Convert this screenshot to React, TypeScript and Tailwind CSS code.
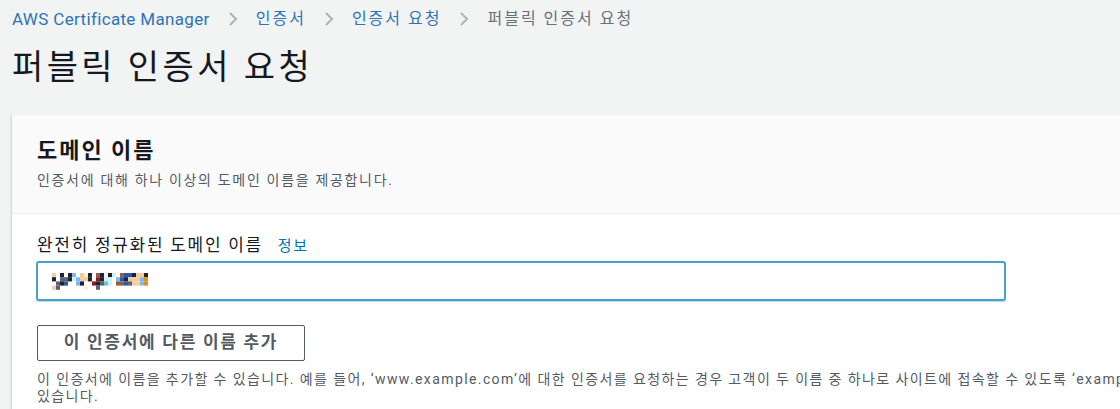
import React from 'react';

const font = "font-['Roboto','Noto_Sans_CJK_KR',sans-serif]";

const mosaicRows = [
  'a.n.kb.apk.mnpkc.mBBnaak.',
  'n.ggkcbaak.rkcc.bBnaaabo.',
  '.skB..bn..rkgbc.mmBgaabo.',
  'as......p..s.............',
];

const mosaicColors: Record<string, string> = {
  a: '#f3cda2',
  n: '#1d1d4d',
  k: '#222228',
  b: '#80b7e6',
  g: '#5b6372',
  c: '#c9f4fa',
  r: '#8d1c25',
  m: '#8a6142',
  B: '#2b5aa0',
  o: '#d8901f',
  p: '#fff1d9',
  s: '#526180',
};

const Mosaic = () => (
  <svg width="100" height="17" viewBox="0 0 100 17">
    {mosaicRows.map((row, y) =>
      row.split('').map((ch, x) =>
        mosaicColors[ch] ? (
          <rect key={`${x}-${y}`} x={x * 4} y={y * 4.2} width="4" height="4.2" fill={mosaicColors[ch]} />
        ) : null
      )
    )}
  </svg>
);

const Chevron = () => (
  <svg width="12" height="16" viewBox="0 0 12 16" className="shrink-0">
    <path d="M3 2l6 6-6 6" fill="none" stroke="#aab7b8" strokeWidth="2" />
  </svg>
);

export default function App() {
  return (
    <div className={`${font} w-[1120px] h-[409px] overflow-hidden bg-[#f2f3f3]`}>
      {/* Breadcrumbs */}
      <nav className="flex items-center gap-[17px] pl-3 pt-[7px] h-[31px] text-[16px] leading-6">
        <a className="text-[#2e73b8] text-[17px] tracking-[0.02em]">AWS Certificate Manager</a>
        <Chevron />
        <a className="text-[#2e73b8] tracking-[2px]">인증서</a>
        <Chevron />
        <a className="text-[#2e73b8] tracking-[2px]">인증서 요청</a>
        <Chevron />
        <span className="text-[#687078] tracking-[2px]">퍼블릭 인증서 요청</span>
      </nav>

      {/* Title */}
      <h1 className="pl-3 pt-[15px] text-[34px] leading-[42px] tracking-[0.1em] text-[#16191f] h-[84px]">퍼블릭 인증서 요청</h1>

      {/* Card */}
      <div className="ml-[11px] w-[1200px] border-l border-[#d5dbdb] shadow-[0_1px_1px_rgba(0,28,36,0.3)] bg-white">
        <div className="bg-[#fafafa] border-b border-[#eaeded] px-[25px] pt-[22px] h-[99px]">
          <h2 className="text-[22px] font-bold leading-7 tracking-[0.09em] text-[#16191f]">도메인 이름</h2>
          <p className="text-[14px] leading-5 tracking-[0.12em] text-[#545b64] mt-[5px]">인증서에 대해 하나 이상의 도메인 이름을 제공합니다.</p>
        </div>

        <div className="px-[25px] pt-[20px] pb-4">
          <div className="flex items-center gap-[15px] h-6">
            <label className="text-[17px] tracking-[0.1em] text-[#16191f]">완전히 정규화된 도메인 이름</label>
            <a className="text-[15px] tracking-[0.1em] text-[#0073bb]">정보</a>
          </div>
          <div className="-ml-[1px] mt-[3px] w-[970px] h-[40px] rounded-[3px] border-2 border-[#44a3cc] bg-white flex items-center pl-[14px] shadow-[0_1px_0_#b9dbe8]">
            <Mosaic />
          </div>

          <button className="mt-[24px] w-[268px] h-[36px] rounded-[2px] border border-[#545b64] bg-white text-[17px] font-bold tracking-[0.1em] text-[#545b64] flex items-center justify-center">
            이 인증서에 다른 이름 추가
          </button>
          <p className="mt-[10px] text-[14px] leading-[17px] tracking-[0.1em] text-[#545b64] whitespace-nowrap">
            이 인증서에 이름을 추가할 수 있습니다. 예를 들어, ‘www.example.com’에 대한 인증서를 요청하는 경우 고객이 두 이름 중 하나로 사이트에 접속할 수 있도록 ‘example.com’이라는 이름을 추가할 수
            <br />
            있습니다.
          </p>
        </div>
      </div>
    </div>
  );
}
